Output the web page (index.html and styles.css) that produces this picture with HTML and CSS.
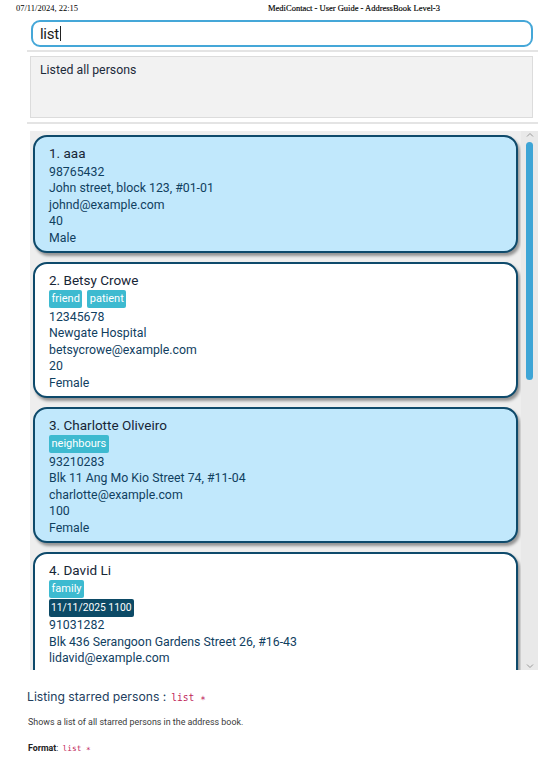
FILE: index.html
```html
<!DOCTYPE html>
<html>
<head>
<meta charset="utf-8">
<link rel="stylesheet" href="styles.css">
</head>
<body>
<header class="print-header">
  <span class="print-date">07/11/2024, 22:15</span>
  <span class="print-title">MediContact - User Guide - AddressBook Level-3</span>
</header>

<div class="app">
  <div class="command-box"><span class="command-text">list</span><span class="caret"></span></div>
  <div class="sep"></div>
  <div class="result-box">Listed all persons</div>
  <div class="sep sep-2"></div>
  <div class="list-panel">
    <div class="list">
      <div class="card card-odd">
        <div class="name">1. aaa</div>
        <div class="line">98765432</div>
        <div class="line">John street, block 123, #01-01</div>
        <div class="line">johnd@example.com</div>
        <div class="line">40</div>
        <div class="line">Male</div>
      </div>
      <div class="card card-even">
        <div class="name">2. Betsy Crowe</div>
        <div class="tags"><span class="tag">friend</span><span class="tag">patient</span></div>
        <div class="line">12345678</div>
        <div class="line">Newgate Hospital</div>
        <div class="line">betsycrowe@example.com</div>
        <div class="line">20</div>
        <div class="line">Female</div>
      </div>
      <div class="card card-odd">
        <div class="name">3. Charlotte Oliveiro</div>
        <div class="tags"><span class="tag">neighbours</span></div>
        <div class="line">93210283</div>
        <div class="line">Blk 11 Ang Mo Kio Street 74, #11-04</div>
        <div class="line">charlotte@example.com</div>
        <div class="line">100</div>
        <div class="line">Female</div>
      </div>
      <div class="card card-even card-last">
        <div class="name">4. David Li</div>
        <div class="tags"><span class="tag">family</span></div>
        <div class="appt"><span class="appt-tag">11/11/2025 1100</span></div>
        <div class="line">91031282</div>
        <div class="line">Blk 436 Serangoon Gardens Street 26, #16-43</div>
        <div class="line">lidavid@example.com</div>
      </div>
    </div>
    <div class="scrollbar">
      <svg class="arrow" width="8" height="6" viewBox="0 0 8 6"><path d="M1 4.5 L4 1.5 L7 4.5" fill="none" stroke="#9a9a9a" stroke-width="1"/></svg>
      <div class="track"><div class="thumb"></div></div>
      <svg class="arrow" width="8" height="6" viewBox="0 0 8 6"><path d="M1 1.5 L4 4.5 L7 1.5" fill="none" stroke="#9a9a9a" stroke-width="1"/></svg>
    </div>
  </div>
</div>

<section class="guide">
  <h3 class="guide-heading"><span class="heading-text">Listing starred persons :</span><code class="code">list ∗</code></h3>
  <p class="guide-text">Shows a list of all starred persons in the address book.</p>
  <p class="guide-format"><strong>Format</strong>: <code class="code code-small">list ∗</code></p>
</section>
</body>
</html>
```

FILE: styles.css
```css
html, body {
  margin: 0;
  padding: 0;
  background: #ffffff;
}

body {
  width: 558px;
  height: 757px;
  overflow: hidden;
  font-family: Roboto, "Liberation Sans", sans-serif;
}

.print-header {
  display: flex;
  height: 16px;
  line-height: 16px;
  padding-left: 16px;
  font-family: "Liberation Serif", serif;
  font-size: 8.5px;
  color: #000;
}

.print-title {
  margin-left: 190px;
  font-weight: 500;
  -webkit-text-stroke: 0.15px #000;
}

.app {
  margin-left: 27px;
  width: 511px;
  padding-top: 4px;
}

.command-box {
  margin-left: 4px;
  width: 502px;
  height: 27px;
  box-sizing: border-box;
  border: 2px solid #45a7d8;
  border-radius: 9px;
  background: #fff;
  display: flex;
  align-items: center;
  padding-left: 7px;
}

.command-text {
  font-size: 15px;
  color: #1b1b1b;
  letter-spacing: -0.3px;
}

.caret {
  display: inline-block;
  width: 1px;
  height: 15px;
  background: #222;
  margin-left: 1px;
}

.sep {
  height: 2px;
  background: #e4e4e4;
  margin-top: 3px;
}

.sep-2 {
  margin-top: 4px;
}

.result-box {
  margin-top: 4px;
  margin-left: 3px;
  width: 503px;
  height: 62px;
  box-sizing: border-box;
  background: #f2f2f2;
  border: 1px solid #dcdcdc;
  padding: 4px 0 0 9px;
  font-size: 12.3px;
  line-height: 18px;
  color: #1c2a3a;
}

.list-panel {
  margin-top: 7px;
  margin-left: 3px;
  width: 508px;
  height: 539px;
  background: #eeeeee;
  display: flex;
  overflow: hidden;
}

.list {
  flex: 1;
  padding: 4px 3px 0 3px;
  overflow: hidden;
}

.card {
  border: 2px solid #0e4a6b;
  border-radius: 14px;
  padding: 7px 0 5px 14px;
  margin-bottom: 9px;
  box-shadow: 2px 3px 3px rgba(0, 0, 0, 0.38);
}

.card-last {
  padding-bottom: 40px;
}

.card-odd {
  background: #c1e8fc;
}

.card-even {
  background: #ffffff;
}

.name {
  font-size: 13.5px;
  line-height: 18px;
  color: #172636;
  margin-bottom: 2px;
}

.line {
  font-size: 12.3px;
  line-height: 16.4px;
  color: #10405f;
}

.tags {
  display: flex;
  gap: 5px;
  height: 18px;
  margin-top: -1px;
  margin-bottom: 1px;
}

.tag {
  background: #3dbad0;
  color: #fff;
  font-size: 11px;
  line-height: 18px;
  height: 18px;
  padding: 0 2.5px;
  border-radius: 2px;
}

.appt {
  display: flex;
  height: 18px;
  margin-top: 1px;
  margin-bottom: 0;
}

.appt-tag {
  background: #0c4a66;
  color: #fff;
  font-size: 10.3px;
  line-height: 18px;
  padding: 0 2px;
  border-radius: 2px;
}

.scrollbar {
  width: 17px;
  background: #e9e9e9;
  display: flex;
  flex-direction: column;
  align-items: center;
}

.arrow {
  flex: none;
  margin: 1px 0;
}

.track {
  flex: 1;
  width: 100%;
}

.thumb {
  margin: 3px auto 0;
  width: 7px;
  height: 238px;
  background: #3ea5d6;
  border-radius: 3.5px;
}

.guide {
  margin-left: 27px;
  margin-top: 17px;
}

.guide-heading {
  margin: 0;
  display: flex;
  align-items: baseline;
  gap: 5px;
  font-family: Inter, Roboto, sans-serif;
  font-weight: 400;
  font-size: 12.2px;
  line-height: 20px;
  color: #23405e;
}

.code {
  font-family: "DejaVu Sans Mono", "Liberation Mono", monospace;
  font-size: 9.6px;
  color: #c0245a;
}

.guide-text {
  margin: 8px 0 0 1px;
  font-size: 8.9px;
  line-height: 12px;
  color: #3a3a3a;
}

.guide-format {
  margin: 14px 0 0 1px;
  font-size: 8.8px;
  line-height: 12px;
  color: #222;
}

.guide-format strong {
  font-weight: 700;
}

.code-small {
  font-size: 7.8px;
  margin-left: 2px;
}
```
